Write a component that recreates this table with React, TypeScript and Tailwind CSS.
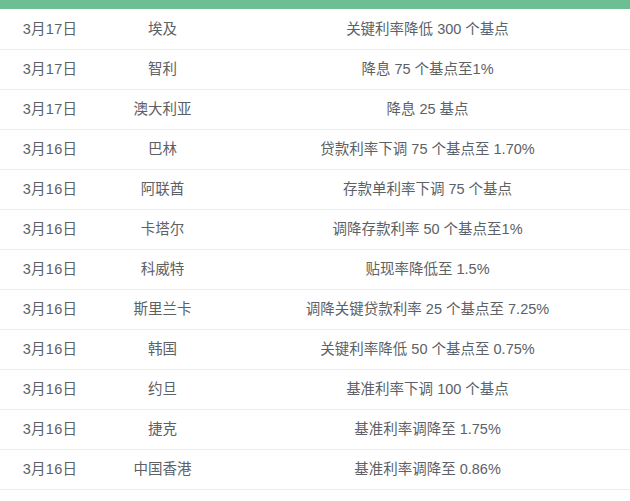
import React from "react";

const rows: [string, string, string][] = [
  ["3月17日", "埃及", "关键利率降低 300 个基点"],
  ["3月17日", "智利", "降息 75 个基点至1%"],
  ["3月17日", "澳大利亚", "降息 25 基点"],
  ["3月16日", "巴林", "贷款利率下调 75 个基点至 1.70%"],
  ["3月16日", "阿联酋", "存款单利率下调 75 个基点"],
  ["3月16日", "卡塔尔", "调降存款利率 50 个基点至1%"],
  ["3月16日", "科威特", "贴现率降低至 1.5%"],
  ["3月16日", "斯里兰卡", "调降关键贷款利率 25 个基点至 7.25%"],
  ["3月16日", "韩国", "关键利率降低 50 个基点至 0.75%"],
  ["3月16日", "约旦", "基准利率下调 100 个基点"],
  ["3月16日", "捷克", "基准利率调降至 1.75%"],
  ["3月16日", "中国香港", "基准利率调降至 0.86%"],
];

export default function App() {
  return (
    <div
      className="w-[630px] h-[501px] overflow-hidden bg-white text-[14.5px] text-[#5c6166]"
      style={{ fontFamily: '"Liberation Sans", "Noto Sans CJK SC", sans-serif' }}
    >
      <div className="h-[9px] bg-[#6bbf93]" />
      <div className="h-px bg-white" />
      {rows.map((r, i) => (
        <div key={i} className="flex h-[40px] items-center border-b border-[#ececec]">
          <div className="w-[100px] text-center tracking-[0.3px]">{r[0]}</div>
          <div className="w-[125px] text-center">{r[1]}</div>
          <div className="flex-1 text-center">{r[2]}</div>
        </div>
      ))}
    </div>
  );
}
